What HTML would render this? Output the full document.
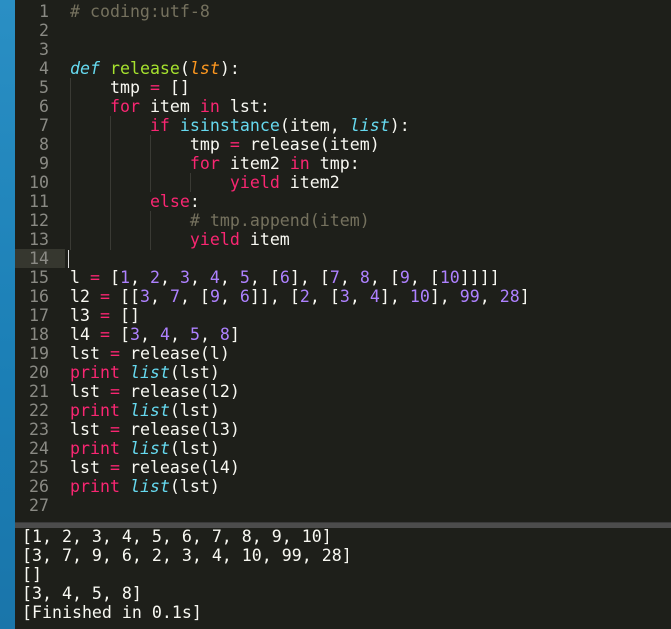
<!DOCTYPE html>
<html><head><meta charset="utf-8"><style>
html,body{margin:0;padding:0;width:671px;height:629px;overflow:hidden;background:#1e1f1a}
.strip{position:absolute;left:0;top:0;width:15px;height:629px;background:linear-gradient(#2a8fc4,#1b7fb6 60%,#1a75aa)}
.ed{position:absolute;left:15px;top:0;width:656px;height:522px;background:#1e1f1a}
pre{margin:0;font-family:"DejaVu Sans Mono","Liberation Mono",monospace;font-size:16.6px;line-height:19px;color:#f8f8f2}
.gut{position:absolute;left:15px;top:2px;width:34px;text-align:right;color:#8a8a84}
.code{position:absolute;left:70px;top:2px}
.hl{position:absolute;left:15px;top:249px;width:50px;height:19px;background:#36372f}
.cur{position:absolute;left:68px;top:250px;width:1px;height:18px;background:#ddd}
.sep{position:absolute;left:15px;top:522px;width:656px;height:5px;background:#4c4c4c;border-top:1px solid #3a3a3a}
.out{position:absolute;left:22px;top:527px}
.c{color:#75715e}.k{color:#f92672}.f{color:#a6e22e}.p{color:#fd971f;font-style:italic}
.b{color:#66d9ef;font-style:italic}.n{color:#ae81ff}.d{color:#66d9ef;font-style:italic}
.g{position:absolute;width:1px;background:#3a3a34}
</style></head><body>
<div class="strip"></div>
<div class="ed"></div>
<div class="hl"></div>
<div class="g" style="left:70px;top:78px;height:172px"></div>
<div class="g" style="left:110px;top:116px;height:134px"></div>
<div class="g" style="left:150px;top:135px;height:57px"></div>
<div class="g" style="left:150px;top:211px;height:39px"></div>
<div class="g" style="left:190px;top:173px;height:19px"></div>
<div class="cur"></div>
<pre class="gut">1
2
3
4
5
6
7
8
9
10
11
12
13
14
15
16
17
18
19
20
21
22
23
24
25
26
27</pre>
<pre class="code"><span class="c"># coding:utf-8</span>


<span class="d">def</span> <span class="f">release</span>(<span class="p">lst</span>):
    tmp <span class="k">=</span> []
    <span class="k">for</span> item <span class="k">in</span> lst:
        <span class="k">if</span> <span style="color:#66d9ef">isinstance</span>(item, <span class="b">list</span>):
            tmp <span class="k">=</span> release(item)
            <span class="k">for</span> item2 <span class="k">in</span> tmp:
                <span class="k">yield</span> item2
        <span class="k">else</span>:
            <span class="c"># tmp.append(item)</span>
            <span class="k">yield</span> item

l <span class="k">=</span> [<span class="n">1</span>, <span class="n">2</span>, <span class="n">3</span>, <span class="n">4</span>, <span class="n">5</span>, [<span class="n">6</span>], [<span class="n">7</span>, <span class="n">8</span>, [<span class="n">9</span>, [<span class="n">10</span>]]]]
l2 <span class="k">=</span> [[<span class="n">3</span>, <span class="n">7</span>, [<span class="n">9</span>, <span class="n">6</span>]], [<span class="n">2</span>, [<span class="n">3</span>, <span class="n">4</span>], <span class="n">10</span>], <span class="n">99</span>, <span class="n">28</span>]
l3 <span class="k">=</span> []
l4 <span class="k">=</span> [<span class="n">3</span>, <span class="n">4</span>, <span class="n">5</span>, <span class="n">8</span>]
lst <span class="k">=</span> release(l)
<span class="k">print</span> <span class="b">list</span>(lst)
lst <span class="k">=</span> release(l2)
<span class="k">print</span> <span class="b">list</span>(lst)
lst <span class="k">=</span> release(l3)
<span class="k">print</span> <span class="b">list</span>(lst)
lst <span class="k">=</span> release(l4)
<span class="k">print</span> <span class="b">list</span>(lst)
</pre>
<div class="sep"></div>
<pre class="out">[1, 2, 3, 4, 5, 6, 7, 8, 9, 10]
[3, 7, 9, 6, 2, 3, 4, 10, 99, 28]
[]
[3, 4, 5, 8]
[Finished in 0.1s]</pre>
</body></html>
